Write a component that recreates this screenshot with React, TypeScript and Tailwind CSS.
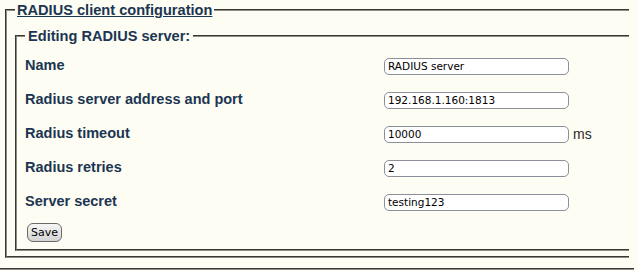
import React from "react";

// One row of the RADIUS server form
interface Field {
  label: string;
  value: string;
  unit?: string;
}

const fields: Field[] = [
  { label: "Name", value: "RADIUS server" },
  { label: "Radius server address and port", value: "192.168.1.160:1813" },
  { label: "Radius timeout", value: "10000", unit: "ms" },
  { label: "Radius retries", value: "2" },
  { label: "Server secret", value: "testing123" },
];

const App = () => {
  return (
    <div className="h-[270px] w-[638px] overflow-hidden bg-[#fdfdf3] font-['Liberation_Sans',Arial,sans-serif] text-[#1b3552]">
      <div className="w-[629px] pl-[5px] pt-[1px]">
        {/* Outer fieldset */}
        <fieldset className="border-2 border-r-0 border-[#8c8c84] [border-style:groove] pl-[8px] pb-[5px] pt-[8px]">
          <legend className="px-[2px] text-[14.6px] font-bold leading-[18px] underline">
            RADIUS client configuration
          </legend>

          {/* Inner fieldset */}
          <fieldset className="border-2 border-r-0 border-[#8c8c84] [border-style:groove] pl-[8px] pb-[6px]">
            <legend className="px-[3px] text-[14.6px] font-bold leading-[18px]">
              Editing RADIUS server:
            </legend>
            <div className="mt-[4px] grid grid-cols-[359px_auto]">
              {fields.map((field) => (
                <React.Fragment key={field.label}>
                  <div className="flex h-[34px] items-center text-[14.5px] font-bold">
                    {field.label}
                  </div>
                  <div className="flex h-[34px] items-center">
                    <input
                      type="text"
                      defaultValue={field.value}
                      className="h-[17px] w-[185px] rounded-[5px] border border-[#8a8f99] bg-white px-[3px] font-['DejaVu_Sans',sans-serif] text-[10.5px] text-black outline-none"
                    />
                    {field.unit && (
                      <span className="ml-[4px] text-[14px] text-[#2a2a2a]">
                        {field.unit}
                      </span>
                    )}
                  </div>
                </React.Fragment>
              ))}
            </div>
            <button className="mt-[4px] ml-[2px] h-[19px] rounded-[6px] border border-[#6a6a6a] bg-gradient-to-b from-[#f6f6f6] to-[#d4d4d4] px-[3px] font-['DejaVu_Sans',sans-serif] text-[11px] leading-none text-black">
              Save
            </button>
          </fieldset>
        </fieldset>
        <div className="-ml-[5px] mt-[10px] w-[634px] border-t-2 border-[#8c8c84] [border-style:groove]" />
      </div>
    </div>
  );
};

export default App;
